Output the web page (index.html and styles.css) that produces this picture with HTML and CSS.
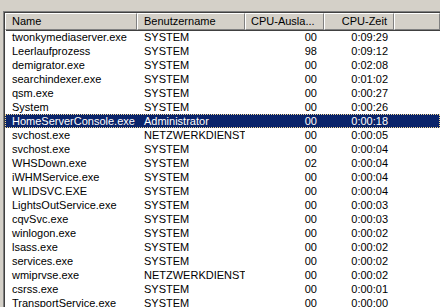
FILE: index.html
```html
<!DOCTYPE html>
<html lang="de">
<head>
<meta charset="UTF-8">
<title>Prozesse</title>
<link rel="stylesheet" href="styles.css">
</head>
<body>

<div class="listview">
    <div class="listview-inner">

        <!-- Column headers -->
        <div class="header">
            <div class="col-head col-name">Name</div>
            <div class="col-head col-user">Benutzername</div>
            <div class="col-head col-cpu">CPU-Ausla...</div>
            <div class="col-head col-time right">CPU-Zeit</div>
            <div class="col-head col-fill"></div>
        </div>

        <!-- Process rows -->
        <div class="rows">
            <div class="row"><span class="c-name">twonkymediaserver.exe</span><span class="c-user">SYSTEM</span><span class="c-cpu">00</span><span class="c-time">0:09:29</span></div>
            <div class="row"><span class="c-name">Leerlaufprozess</span><span class="c-user">SYSTEM</span><span class="c-cpu">98</span><span class="c-time">0:09:12</span></div>
            <div class="row"><span class="c-name">demigrator.exe</span><span class="c-user">SYSTEM</span><span class="c-cpu">00</span><span class="c-time">0:02:08</span></div>
            <div class="row"><span class="c-name">searchindexer.exe</span><span class="c-user">SYSTEM</span><span class="c-cpu">00</span><span class="c-time">0:01:02</span></div>
            <div class="row"><span class="c-name">qsm.exe</span><span class="c-user">SYSTEM</span><span class="c-cpu">00</span><span class="c-time">0:00:27</span></div>
            <div class="row"><span class="c-name">System</span><span class="c-user">SYSTEM</span><span class="c-cpu">00</span><span class="c-time">0:00:26</span></div>
            <div class="row selected"><span class="c-name">HomeServerConsole.exe</span><span class="c-user">Administrator</span><span class="c-cpu">00</span><span class="c-time">0:00:18</span></div>
            <div class="row"><span class="c-name">svchost.exe</span><span class="c-user">NETZWERKDIENST</span><span class="c-cpu">00</span><span class="c-time">0:00:05</span></div>
            <div class="row"><span class="c-name">svchost.exe</span><span class="c-user">SYSTEM</span><span class="c-cpu">00</span><span class="c-time">0:00:04</span></div>
            <div class="row"><span class="c-name">WHSDown.exe</span><span class="c-user">SYSTEM</span><span class="c-cpu">02</span><span class="c-time">0:00:04</span></div>
            <div class="row"><span class="c-name">iWHMService.exe</span><span class="c-user">SYSTEM</span><span class="c-cpu">00</span><span class="c-time">0:00:04</span></div>
            <div class="row"><span class="c-name">WLIDSVC.EXE</span><span class="c-user">SYSTEM</span><span class="c-cpu">00</span><span class="c-time">0:00:04</span></div>
            <div class="row"><span class="c-name">LightsOutService.exe</span><span class="c-user">SYSTEM</span><span class="c-cpu">00</span><span class="c-time">0:00:03</span></div>
            <div class="row"><span class="c-name">cqvSvc.exe</span><span class="c-user">SYSTEM</span><span class="c-cpu">00</span><span class="c-time">0:00:03</span></div>
            <div class="row"><span class="c-name">winlogon.exe</span><span class="c-user">SYSTEM</span><span class="c-cpu">00</span><span class="c-time">0:00:02</span></div>
            <div class="row"><span class="c-name">lsass.exe</span><span class="c-user">SYSTEM</span><span class="c-cpu">00</span><span class="c-time">0:00:02</span></div>
            <div class="row"><span class="c-name">services.exe</span><span class="c-user">SYSTEM</span><span class="c-cpu">00</span><span class="c-time">0:00:02</span></div>
            <div class="row"><span class="c-name">wmiprvse.exe</span><span class="c-user">NETZWERKDIENST</span><span class="c-cpu">00</span><span class="c-time">0:00:02</span></div>
            <div class="row"><span class="c-name">csrss.exe</span><span class="c-user">SYSTEM</span><span class="c-cpu">00</span><span class="c-time">0:00:01</span></div>
            <div class="row"><span class="c-name">TransportService.exe</span><span class="c-user">SYSTEM</span><span class="c-cpu">00</span><span class="c-time">0:00:00</span></div>
        </div>

    </div>
</div>

</body>
</html>
```

FILE: styles.css
```css
body {
    margin: 0;
    background-color: #d4d0c8;
    font-family: "Liberation Sans", Arial, sans-serif;
    font-size: 11px;
    color: #000;
    overflow: hidden;
    height: 307px;
}

/* sunken list view frame */
.listview {
    margin: 11px 0 0 3px;
    border-top: 1px solid #808080;
    border-left: 1px solid #808080;
    height: 400px;
}
.listview-inner {
    border-top: 1px solid #404040;
    border-left: 1px solid #404040;
    background-color: #fff;
    height: 100%;
}

/* header bar */
.header { display: flex; height: 17px; background-color: #d4d0c8; }
.col-head {
    box-sizing: border-box;
    height: 17px;
    line-height: 14px;
    padding: 0 6px;
    border-top: 1px solid #fff;
    border-left: 1px solid #fff;
    border-right: 1px solid #808080;
    border-bottom: 1px solid #808080;
    box-shadow: 1px 1px 0 #404040;
    white-space: nowrap;
    overflow: hidden;
    position: relative;
}
.col-head.right { text-align: right; }
.col-name { width: 132px; }
.col-user { width: 108px; }
.col-cpu { width: 79px; padding-left: 5px; }
.col-time { width: 70px; }
.col-fill { flex: 1; }

/* rows */
.row {
    display: grid;
    grid-template-columns: 132px 108px 79px 70px 1fr;
    height: 14px;
    line-height: 14px;
    white-space: nowrap;
}
.row span { overflow: hidden; padding: 0 7px; }
.c-cpu, .c-time { text-align: right; }
.row .c-time { padding-right: 6px; }

.row.selected {
    background-color: #0a246a;
    color: #fff;
    outline: 1px dotted #f5db95;
    outline-offset: -1px;
}
```
